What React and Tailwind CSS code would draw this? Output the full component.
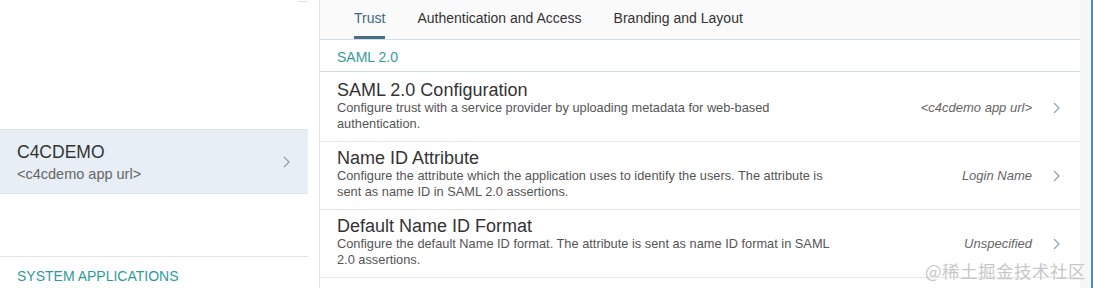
import React from "react";

const rows = [
  {
    title: "SAML 2.0 Configuration",
    desc: "Configure trust with a service provider by uploading metadata for web-based authentication.",
    value: "<c4cdemo app url>",
    h: "h-[70px] pt-[8px]",
  },
  {
    title: "Name ID Attribute",
    desc: "Configure the attribute which the application uses to identify the users. The attribute is sent as name ID in SAML 2.0 assertions.",
    value: "Login Name",
    h: "h-[68px] pt-[6px]",
  },
  {
    title: "Default Name ID Format",
    desc: "Configure the default Name ID format. The attribute is sent as name ID format in SAML 2.0 assertions.",
    value: "Unspecified",
    h: "h-[68px] pt-[6px]",
  },
];

function Chevron({ className }) {
  return (
    <svg width="7" height="12" viewBox="0 0 7 12" className={className}>
      <path d="M1 1l5 5-5 5" fill="none" stroke="currentColor" strokeWidth="1.1" />
    </svg>
  );
}

export default function App() {
  return (
    <div
      className="relative flex w-[1093px] h-[288px] overflow-hidden bg-white"
      style={{ fontFamily: '"Liberation Sans", Arial, sans-serif' }}
    >
      {/* left list */}
      <div className="w-[320px] shrink-0 border-r border-[#e4e4e4] bg-white flex flex-col">
        <div className="w-[308px] flex flex-col">
          <div className="h-[129px] flex justify-end">
            <div className="w-[10px] h-px bg-[#e2e2e2] mt-px" />
          </div>
          <div className="h-[65px] bg-[#e8eef5] border-y border-[#dfe4ea] flex items-center pl-[17px] pr-[18px]">
            <div className="flex-1 pt-[2px]">
              <div className="text-[17.5px] leading-[20px] text-[#333]">C4CDEMO</div>
              <div className="text-[14.5px] leading-[18px] text-[#666] mt-[3px]">&lt;c4cdemo app url&gt;</div>
            </div>
            <Chevron className="text-[#8a9bb0]" />
          </div>
          <div className="h-[63px] border-b border-[#e4e4e4]" />
          <div className="pl-[17px] pt-[9px] text-[14px] text-[#2e9b9b]">SYSTEM APPLICATIONS</div>
        </div>
      </div>

      {/* right panel */}
      <div className="flex-1 flex bg-[#f7f7f7] border-r-2 border-[#3b8fd6]">
        <div className="w-[760px] flex flex-col">
          <div className="h-[40px] bg-[#fafafa] border-b border-[#d3dde6] flex items-end pl-[34px] gap-[32px] text-[14px]">
            <div className="h-[39px] flex flex-col justify-between">
              <span className="pt-[8px] text-[#43677f]">Trust</span>
              <div className="h-[3px] bg-[#4a6d86]" />
            </div>
            <div className="h-[39px] pt-[8px] text-[#333]">Authentication and Access</div>
            <div className="h-[39px] pt-[8px] text-[#333]">Branding and Layout</div>
          </div>
          <div className="flex-1 bg-white">
            <div className="h-[32px] border-b border-[#cbdfe0] flex items-center pt-[3px] pl-[17px] text-[14px] text-[#3a9a9a]">
              SAML 2.0
            </div>
            {rows.map((r) => (
              <div
                key={r.title}
                className={`${r.h} border-b border-[#e5e5e5] flex items-start pl-[17px] pr-[20px]`}
              >
                <div className="flex-1">
                  <div className="text-[18px] leading-[20px] text-[#333]">{r.title}</div>
                  <div className="w-[500px] text-[12.8px] leading-[16px] text-[#555]">{r.desc}</div>
                </div>
                <div className="self-center flex items-center -mt-[6px]">
                  <div className="text-[13px] italic text-[#666] mr-[21px]">{r.value}</div>
                  <Chevron className="text-[#8a9bb0]" />
                </div>
              </div>
            ))}
          </div>
        </div>
      </div>

      <div className="absolute left-[925px] top-[258px] text-[17.5px] text-[#c8c8c8] tracking-[0.5px]" style={{ fontFamily: '"Noto Sans CJK SC", sans-serif' }}>
        @稀土掘金技术社区
      </div>
    </div>
  );
}
